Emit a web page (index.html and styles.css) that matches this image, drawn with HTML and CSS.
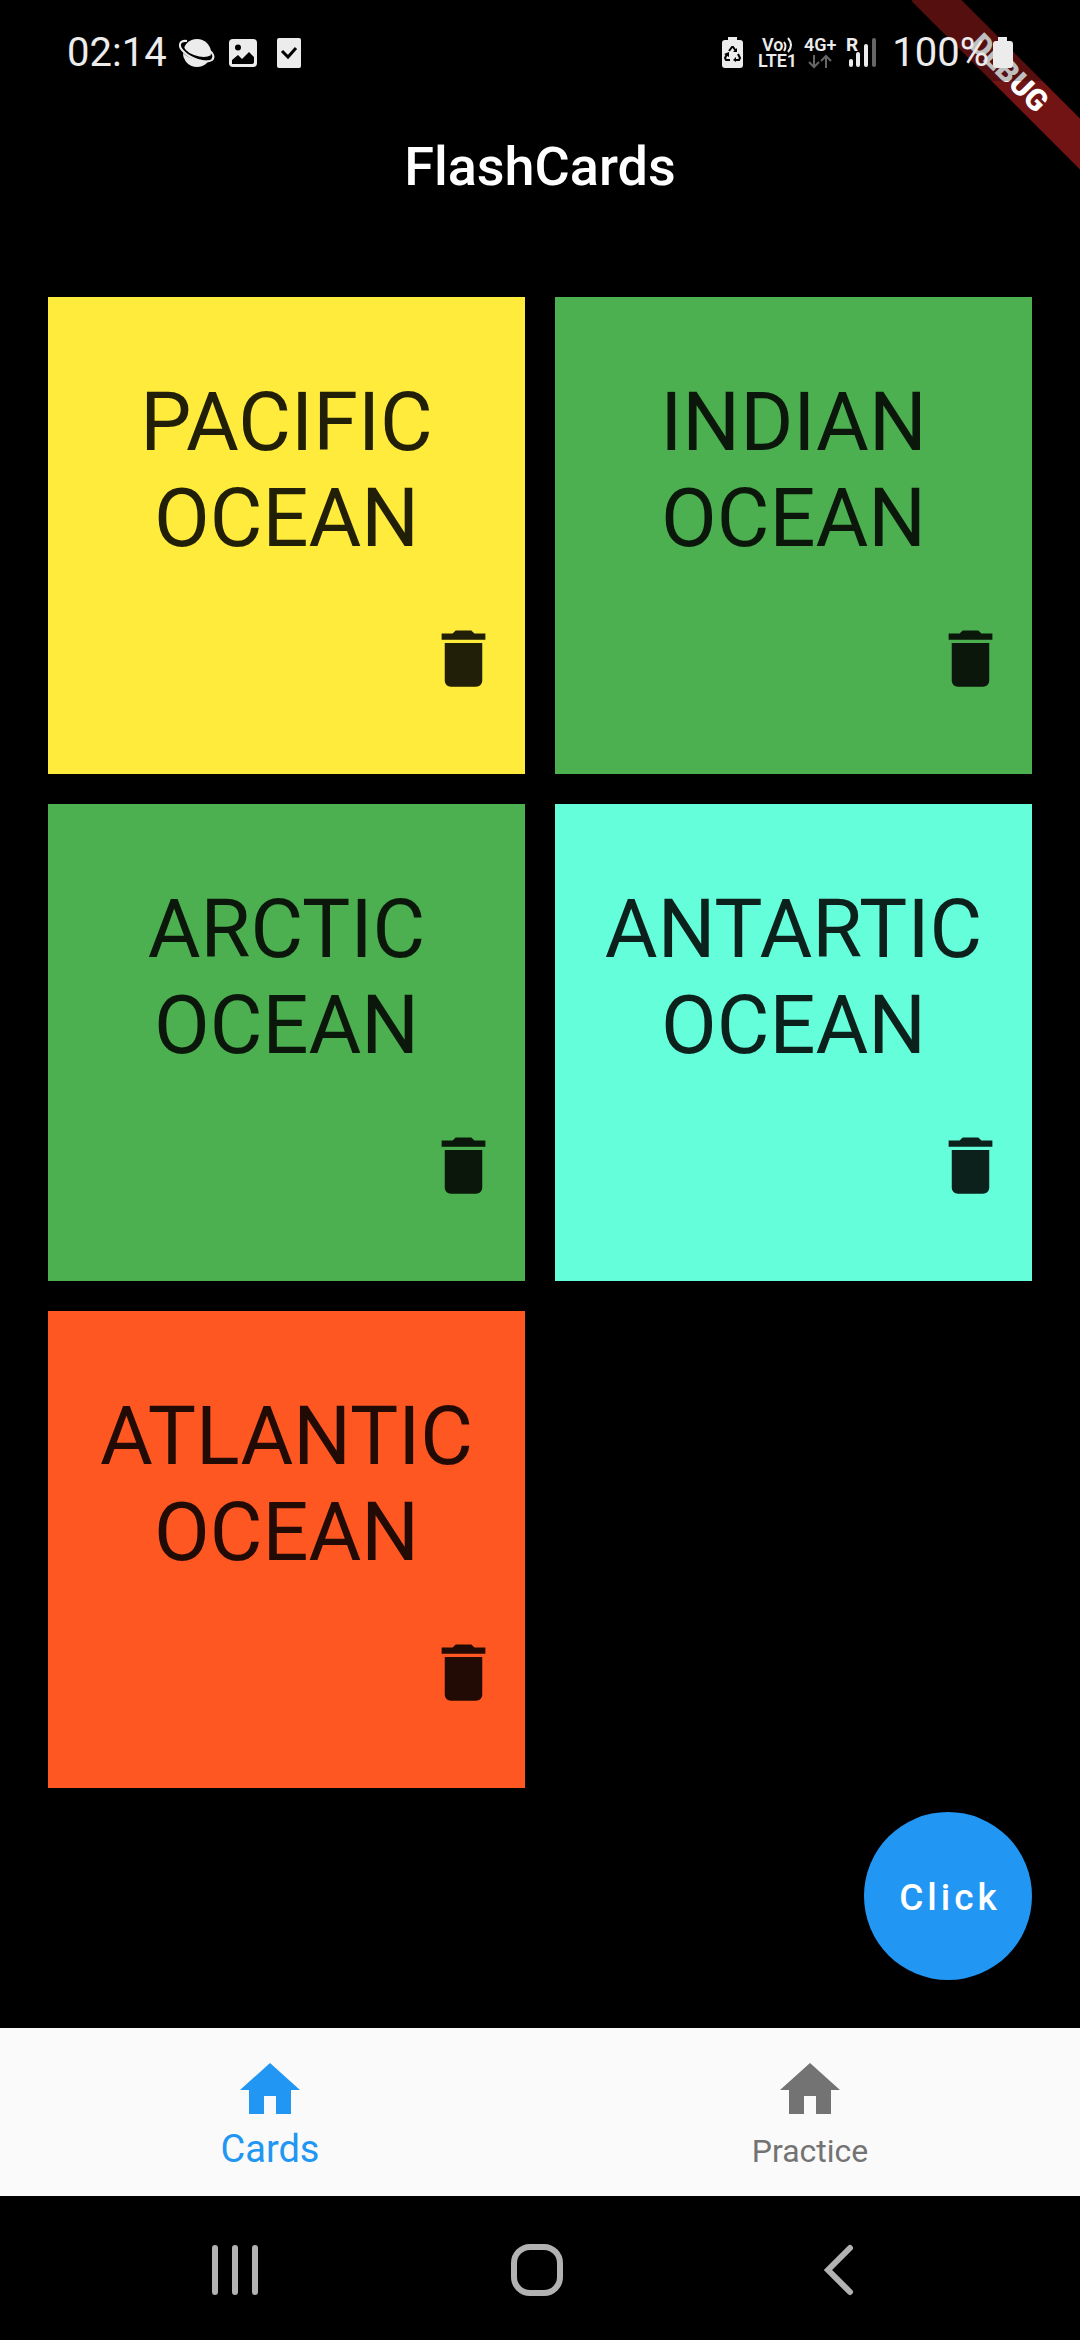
FILE: index.html
```html
<!DOCTYPE html>
<html lang="en">
<head>
  <meta charset="utf-8">
  <meta name="viewport" content="width=device-width, initial-scale=1">
  <title>FlashCards</title>
  <link rel="stylesheet" href="styles.css">
</head>
<body>
  <svg class="sprite" aria-hidden="true">
    <symbol id="icon-delete" viewBox="0 0 24 24"><path d="M6 19c0 1.100.9 2 2 2h8c1.100 0 2-.9 2-2V7H6v12zM19 4h-3.500l-1-1h-5l-1 1H5v2h14V4z"/></symbol>
    <symbol id="icon-home" viewBox="0 0 24 24"><path d="M10 20v-6h4v6h5v-8h3L12 3 2 12h3v8z"/></symbol>
  </svg>

  <div class="banner-corner"><div class="banner">DEBUG</div></div>

  <div class="status-bar">
    <div class="status-group status-left">
      <span class="status-text">02:14</span>
      <svg class="planet" width="36" height="30" viewBox="0 0 36 30">
        <circle cx="18" cy="15" r="14" fill="#ececec"/>
        <path d="M3 6C2 18 24 24 33 19" fill="none" stroke="#000" stroke-width="4"/>
        <path d="M8 3C0 2-1 8 4 13c7 8 23 13 29 9 3-3 1-7-3-10" fill="none" stroke="#ececec" stroke-width="2"/>
      </svg>
      <svg class="photo" width="28" height="28" viewBox="0 0 28 28">
        <rect width="28" height="28" rx="4" fill="#ececec"/>
        <circle cx="9" cy="8.500" r="3" fill="#000"/>
        <path d="M3 25v-4l6-5 4 4 7-7 5 5v5q0 2-2 2z" fill="#000"/>
      </svg>
      <svg class="check" width="24" height="30" viewBox="0 0 24 30">
        <rect width="24" height="30" rx="2" fill="#ececec"/>
        <path d="M5 13l6 6 8-9" fill="none" stroke="#000" stroke-width="3"/>
      </svg>
    </div>
    <div class="status-group status-right">
      <svg width="21" height="31" viewBox="0 0 21 31">
        <path d="M6 0h9v3h3a3 3 0 0 1 3 3v22a3 3 0 0 1-3 3H3a3 3 0 0 1-3-3V6a3 3 0 0 1 3-3h3z" fill="#ececec"/>
        <path d="M7 14l3-4h1l3 4M16 17l2 4-1 2h-4M8 23H4l-1-2 2-4" fill="none" stroke="#000" stroke-width="2"/>
        <path d="M15 11v4h-4zM14 20v5l-3-2zM2 17l5-2v5z" fill="#000"/>
      </svg>
      <svg class="lte" width="38" height="31" viewBox="0 0 38 31">
        <text x="4" y="14" font-size="18" font-weight="600">Vo</text>
        <text x="0" y="30" font-size="18" font-weight="600">LTE1</text>
        <path d="M26 5q3 4 0 9M30 1q6 7 0 14" fill="none" stroke="#ececec" stroke-width="2"/>
      </svg>
      <svg class="data" width="33" height="31" viewBox="0 0 33 31">
        <text x="0" y="14" font-size="18" font-weight="600">4G+</text>
        <path d="M10 18v12M5 25l5 5 5-5M22 31V19M17 24l5-5 5 5" fill="none" stroke="#666" stroke-width="2"/>
      </svg>
      <svg class="signal" width="31" height="31" viewBox="0 0 31 31">
        <text x="0" y="14" font-size="19" font-weight="700">R</text>
        <path d="M5 24v4M12 17v11M20 9v19" stroke="#ececec" stroke-width="4" stroke-linecap="round"/>
        <path d="M28 3v25" stroke="#666" stroke-width="4" stroke-linecap="round"/>
      </svg>
      <span class="status-text">100%</span>
      <svg class="battery" width="20" height="31" viewBox="0 0 20 31">
        <path d="M5 0h9v4h3a3 3 0 0 1 3 3v21a3 3 0 0 1-3 3H3a3 3 0 0 1-3-3V7a3 3 0 0 1 3-3h2z" fill="#ececec"/>
      </svg>
    </div>
  </div>

  <header class="app-bar"><h1 class="app-title">FlashCards</h1></header>

  <main class="content">
    <div class="card-grid">
      <article class="card yellow">
        <h2 class="card-title">PACIFIC OCEAN</h2>
        <button class="delete" type="button" aria-label="Delete Pacific Ocean"><svg class="delete-icon"><use href="#icon-delete"/></svg></button>
      </article>
      <article class="card green">
        <h2 class="card-title">INDIAN OCEAN</h2>
        <button class="delete" type="button" aria-label="Delete Indian Ocean"><svg class="delete-icon"><use href="#icon-delete"/></svg></button>
      </article>
      <article class="card green">
        <h2 class="card-title">ARCTIC OCEAN</h2>
        <button class="delete" type="button" aria-label="Delete Arctic Ocean"><svg class="delete-icon"><use href="#icon-delete"/></svg></button>
      </article>
      <article class="card teal">
        <h2 class="card-title">ANTARTIC OCEAN</h2>
        <button class="delete" type="button" aria-label="Delete Antartic Ocean"><svg class="delete-icon"><use href="#icon-delete"/></svg></button>
      </article>
      <article class="card orange">
        <h2 class="card-title">ATLANTIC OCEAN</h2>
        <button class="delete" type="button" aria-label="Delete Atlantic Ocean"><svg class="delete-icon"><use href="#icon-delete"/></svg></button>
      </article>
    </div>
    <button class="fab" type="button">Click</button>
  </main>

  <nav class="tabs">
    <a class="tab active" href="#cards"><svg class="tab-icon"><use href="#icon-home"/></svg><span>Cards</span></a>
    <a class="tab" href="#practice"><svg class="tab-icon"><use href="#icon-home"/></svg><span>Practice</span></a>
  </nav>

  <div class="system-nav">
    <button class="system-button" type="button" aria-label="Recent apps">
      <svg width="54" height="54" viewBox="0 0 54 54"><path d="M7 5v44M27 5v44M47 5v44"/></svg>
    </button>
    <button class="system-button" type="button" aria-label="Home">
      <svg width="54" height="54" viewBox="0 0 54 54"><rect x="4" y="4" width="46" height="46" rx="16"/></svg>
    </button>
    <button class="system-button" type="button" aria-label="Back">
      <svg width="54" height="54" viewBox="0 0 54 54"><path d="M38 5L16 27l22 22"/></svg>
    </button>
  </div>
</body>
</html>
```

FILE: styles.css
```css
* {
  box-sizing: border-box;
}

body {
  position: relative;
  display: flex;
  flex-direction: column;
  min-height: 100vh;
  margin: 0;
  background: #000;
  color: #fff;
  font-family: Roboto, "Noto Sans", sans-serif;
}

button {
  margin: 0;
  padding: 0;
  border: 0;
  background: none;
  font-family: inherit;
  cursor: pointer;
}

svg {
  display: block;
  flex: none;
  overflow: visible;
}

.sprite {
  position: absolute;
  width: 0;
  height: 0;
}

/* Ribbon across the top right corner */
.banner-corner {
  position: absolute;
  top: 0;
  right: 0;
  width: 172px;
  height: 172px;
  overflow: hidden;
}

.banner {
  position: absolute;
  top: 55px;
  right: -49px;
  width: 240px;
  height: 36px;
  background: #731414;
  transform: rotate(45deg);
  font-size: 30px;
  font-weight: 900;
  line-height: 36px;
  text-align: center;
}

/* Status bar, with its own shade over the ribbon */
.status-bar {
  position: relative;
  display: flex;
  justify-content: space-between;
  align-items: center;
  height: 81px;
  padding: 24px 67px 0;
  background: rgba(0, 0, 0, 0.25);
  color: #ececec;
}

.status-group {
  display: flex;
  align-items: center;
}

.status-bar text {
  fill: #ececec;
}

.status-text {
  font-size: 40px;
  line-height: 46px;
}

.planet {
  margin-left: 12px;
}

.photo {
  margin-left: 14px;
}

.check {
  margin-left: 20px;
}

.lte {
  margin-left: 15px;
}

.data {
  margin-left: 8px;
}

.signal {
  margin: 0 15px 0 9px;
}

.battery {
  margin-left: 4px;
}

.app-bar {
  display: flex;
  justify-content: center;
  align-items: center;
  height: 168px;
  padding-top: 4px;
}

.app-title {
  margin: 0;
  font-size: 54px;
  font-weight: 500;
  line-height: 64px;
}

.content {
  position: relative;
  flex: 1;
  padding: 48px;
}

.card-grid {
  display: grid;
  grid-template-columns: 1fr 1fr;
  gap: 30px;
}

.card {
  display: flex;
  flex-direction: column;
  align-items: center;
  gap: 54px;
  aspect-ratio: 1;
  padding: 78px 24px 0;
  color: rgba(0, 0, 0, 0.87);
}

.yellow {
  background: #ffeb3b;
}

.green {
  background: #4caf50;
}

.teal {
  background: #64ffda;
}

.orange {
  background: #ff5722;
}

.card-title {
  width: min-content;
  margin: 0;
  font-size: 81px;
  font-weight: 400;
  line-height: 96px;
  text-align: center;
}

.delete {
  align-self: flex-end;
  color: inherit;
}

.delete-icon {
  width: 75px;
  height: 75px;
  fill: currentColor;
}

.fab {
  position: absolute;
  right: 48px;
  bottom: 48px;
  width: 168px;
  height: 168px;
  padding: 2px 0 0 4px;
  border-radius: 50%;
  background: #2196f3;
  color: #fff;
  font-size: 37px;
  font-weight: 500;
  letter-spacing: 4px;
}

.tabs {
  display: grid;
  grid-template-columns: 1fr 1fr;
  height: 168px;
  background: #fafafa;
}

.tab {
  display: flex;
  flex-direction: column;
  align-items: center;
  padding-top: 26px;
  color: #737373;
  font-size: 32px;
  line-height: 50px;
  text-decoration: none;
}

.tab.active {
  color: #2196f3;
  font-size: 38px;
  line-height: 46px;
}

.tab-icon {
  width: 72px;
  height: 72px;
  fill: currentColor;
}

.system-nav {
  display: grid;
  grid-template-columns: 1fr 1fr 1fr;
  height: 144px;
  padding: 4px 90px 0 84px;
}

.system-button {
  display: flex;
  justify-content: center;
  align-items: center;
  fill: none;
  stroke: #b2b2b2;
  stroke-width: 6;
  stroke-linecap: round;
}
```
